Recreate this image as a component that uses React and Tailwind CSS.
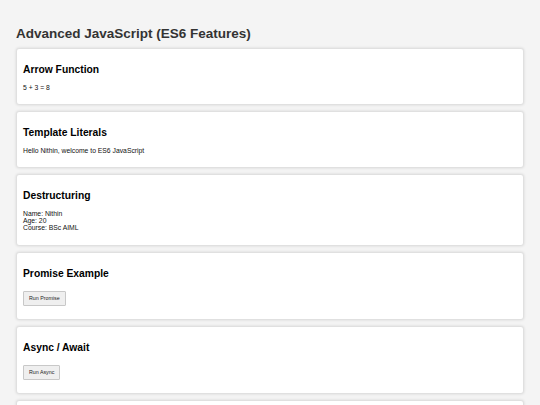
import React from "react";

function Card({ title, children, button }) {
  return (
    <div className="bg-white rounded-[3px] border border-[#e0e0e0] shadow-[0_0_3px_rgba(0,0,0,0.12)] px-[6px] pt-[14px] pb-[13px]">
      <h3 className="text-[10.3px] font-bold leading-[13.2px] text-[#000]">{title}</h3>
      {button ? (
        <div className="mt-[11px] flex">
          <button className="h-[15px] px-[5px] text-[5.3px] leading-none text-[#222] bg-[#efefef] border border-[#c8c8c8] rounded-[1px]">
            {button}
          </button>
        </div>
      ) : (
        <div className="mt-[7.5px] text-[6.8px] leading-[7.35px] text-[#111]">{children}</div>
      )}
    </div>
  );
}

export default function App() {
  return (
    <div
      className="min-h-[405px] bg-[#f4f4f4] px-[16px] pt-[25px] pb-4"
      style={{ fontFamily: '"Liberation Sans", Arial, sans-serif' }}
    >
      <h1 className="text-[13.5px] font-bold leading-[17px] text-[#333] mb-[6px]">
        Advanced JavaScript (ES6 Features)
      </h1>
      <div className="w-[508px] flex flex-col gap-[6px]">
        <Card title="Arrow Function">
          <p>5 + 3 = 8</p>
        </Card>
        <Card title="Template Literals">
          <p>Hello Nithin, welcome to ES6 JavaScript</p>
        </Card>
        <Card title="Destructuring">
          <p>Name: Nithin</p>
          <p>Age: 20</p>
          <p>Course: BSc AIML</p>
        </Card>
        <Card title="Promise Example" button="Run Promise" />
        <Card title="Async / Await" button="Run Async" />
        <Card title="Spread Operator">
          <p>1, 2, 3, 4, 5</p>
        </Card>
      </div>
    </div>
  );
}
